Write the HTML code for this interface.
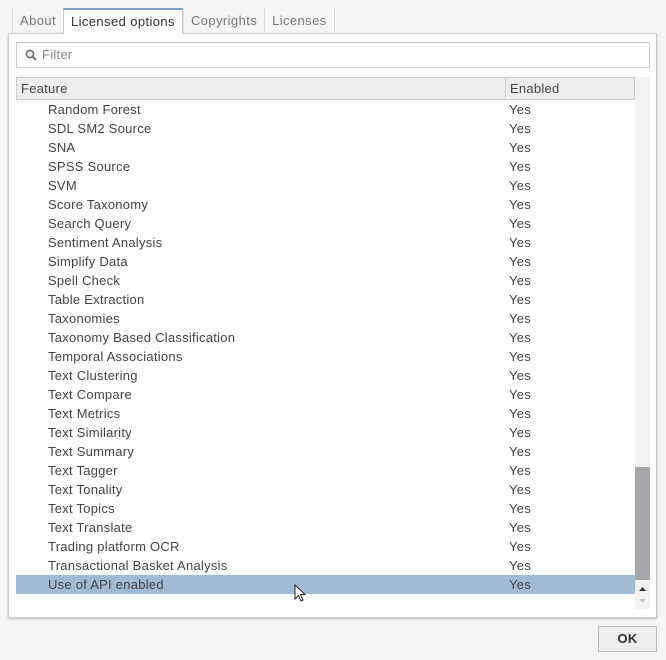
<!DOCTYPE html>
<html><head><style>
*{margin:0;padding:0;box-sizing:border-box}
body{width:666px;height:660px;background:#f5f5f5;font-family:"Liberation Sans",sans-serif;font-size:12.5px;color:#444;position:relative;overflow:hidden;letter-spacing:0.25px}
.tabs{position:absolute;left:12px;top:8px;height:25px;display:flex}
.tab{height:25px;line-height:26px;padding:0 7px;color:#777;border-left:1px solid #ddd;font-size:13px;letter-spacing:0.4px}
.tab.act{background:#fff;color:#333;border:1px solid #ccc;border-top:2px solid #7ba0c8;border-bottom:none;height:26px;line-height:23px;z-index:2;position:relative}
.panel{position:absolute;left:8px;top:33px;width:649px;height:585px;background:#fff;border:1px solid #ccc;box-shadow:0 1px 2px rgba(0,0,0,.25)}
.filter{position:absolute;left:16px;top:42px;width:634px;height:26px;border:1px solid #ccc;line-height:24px;padding-left:25px;color:#888;font-size:13px}
.filter svg{position:absolute;left:8px;top:6px}
.hdr{position:absolute;left:16px;top:77px;width:619px;height:23px;background:#eee;border:1px solid #ccc;line-height:21px;font-size:13px}
.hdr span{position:absolute;left:4px}
.hdr .e{border-left:1px solid #ccc;padding-left:4px;left:488px;height:21px}
.rows{position:absolute;left:16px;top:100px;width:619px}
.r{height:19px;line-height:19px;position:relative;font-size:13px}
.r span{position:absolute;left:32px}
.r b{font-weight:normal;position:absolute;left:493px}
.r.sel{background:#a2bbd5}
.sb{position:absolute;left:635px;top:77px;width:15px;height:532px;background:#f3f3f3}
.th{position:absolute;left:635px;top:467px;width:15px;height:113px;background:#a5a6aa}
.ok{position:absolute;left:598px;top:626px;width:59px;height:26px;border:1px solid #bbb;background:#eee;font-weight:bold;text-align:center;line-height:24px;font-size:13px;color:#333}
</style></head><body>
<div class="panel"></div>
<div class="tabs"><div class="tab">About</div><div class="tab act">Licensed options</div><div class="tab">Copyrights</div><div class="tab">Licenses</div><div class="tab" style="padding:0"></div></div>
<div class="filter"><svg width="12" height="12" viewBox="0 0 12 12"><circle cx="5" cy="5" r="3.6" fill="none" stroke="#777" stroke-width="1.8"/><path d="M7.6 7.6L11 11" stroke="#777" stroke-width="2"/></svg>Filter</div>
<div class="hdr"><span>Feature</span><span class="e">Enabled</span></div>
<div class="rows">
<div class="r"><span>Random Forest</span><b>Yes</b></div>
<div class="r"><span>SDL SM2 Source</span><b>Yes</b></div>
<div class="r"><span>SNA</span><b>Yes</b></div>
<div class="r"><span>SPSS Source</span><b>Yes</b></div>
<div class="r"><span>SVM</span><b>Yes</b></div>
<div class="r"><span>Score Taxonomy</span><b>Yes</b></div>
<div class="r"><span>Search Query</span><b>Yes</b></div>
<div class="r"><span>Sentiment Analysis</span><b>Yes</b></div>
<div class="r"><span>Simplify Data</span><b>Yes</b></div>
<div class="r"><span>Spell Check</span><b>Yes</b></div>
<div class="r"><span>Table Extraction</span><b>Yes</b></div>
<div class="r"><span>Taxonomies</span><b>Yes</b></div>
<div class="r"><span>Taxonomy Based Classification</span><b>Yes</b></div>
<div class="r"><span>Temporal Associations</span><b>Yes</b></div>
<div class="r"><span>Text Clustering</span><b>Yes</b></div>
<div class="r"><span>Text Compare</span><b>Yes</b></div>
<div class="r"><span>Text Metrics</span><b>Yes</b></div>
<div class="r"><span>Text Similarity</span><b>Yes</b></div>
<div class="r"><span>Text Summary</span><b>Yes</b></div>
<div class="r"><span>Text Tagger</span><b>Yes</b></div>
<div class="r"><span>Text Tonality</span><b>Yes</b></div>
<div class="r"><span>Text Topics</span><b>Yes</b></div>
<div class="r"><span>Text Translate</span><b>Yes</b></div>
<div class="r"><span>Trading platform OCR</span><b>Yes</b></div>
<div class="r"><span>Transactional Basket Analysis</span><b>Yes</b></div>
<div class="r sel"><span>Use of API enabled</span><b>Yes</b></div>
</div>
<div class="sb"></div><div class="th"></div>
<svg style="position:absolute;left:638px;top:585px" width="9" height="20"><path d="M1 6L4.5 2L8 6Z" fill="#333"/><path d="M1 14L4.5 18L8 14Z" fill="#ccc"/></svg>
<svg style="position:absolute;left:294px;top:584px" width="14" height="20"><path d="M1 1L1 15L4.5 11.5L7 17L9 16L6.5 10.5L11 10.5Z" fill="#fff" stroke="#222"/></svg>
<div class="ok">OK</div>
</body></html>
